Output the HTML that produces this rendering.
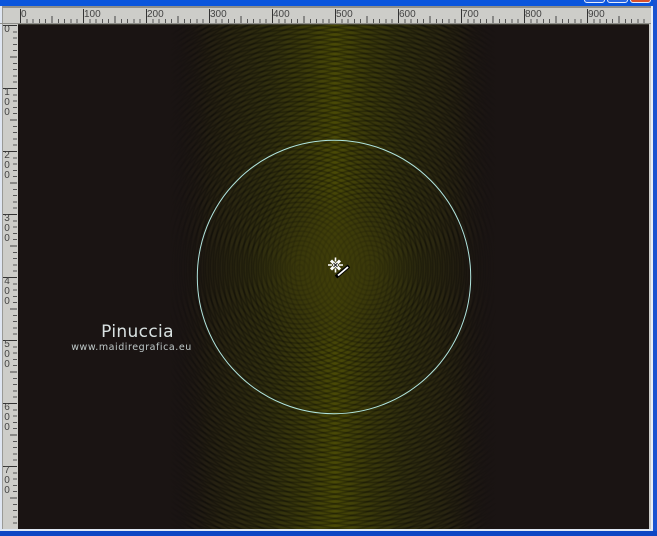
<!DOCTYPE html>
<html>
<head>
<meta charset="utf-8">
<style>
html,body{margin:0;padding:0;background:#0a3fc0;}
#w{position:relative;width:657px;height:536px;overflow:hidden;background:#cdcdc9;font-family:"Liberation Sans",sans-serif;}
.a{position:absolute;}
.hl{font-size:10px;line-height:10px;color:#444;top:10px;}
.vd{font-size:10px;line-height:10px;color:#444;left:3px;width:8px;text-align:center;}
</style>
</head>
<body>
<div id="w">
  <!-- window frame -->
  <div class="a" style="left:0;top:0;width:657px;height:6px;background:#0a55dc;"></div>
  <div class="a" style="left:0;top:6px;width:657px;height:2px;background:#8e8e8a;"></div>
  <div class="a" style="left:584px;top:-7px;width:19px;height:8px;border:1px solid #e8eefc;border-radius:3px;background:#2a66e0;"></div>
  <div class="a" style="left:607px;top:-7px;width:19px;height:8px;border:1px solid #e8eefc;border-radius:3px;background:#2a66e0;"></div>
  <div class="a" style="left:630px;top:-7px;width:19px;height:8px;border:1px solid #e8eefc;border-radius:3px;background:#d8502c;"></div>
  <div class="a" style="left:0;top:6px;width:2px;height:526px;background:#dfe6f2;"></div>
  <div class="a" style="left:2px;top:8px;width:1px;height:522px;background:#9a9a96;"></div>
  <div class="a" style="left:651px;top:6px;width:2px;height:526px;background:#e8eef6;"></div>
  <div class="a" style="left:653px;top:0;width:4px;height:536px;background:#1a52d0;"></div>
  <div class="a" style="left:0;top:529px;width:653px;height:2px;background:#dfe8f4;"></div>
  <div class="a" style="left:0;top:531px;width:657px;height:5px;background:#0e46c4;"></div>

  <!-- horizontal ruler -->
  <div class="a" style="left:20px;top:19px;width:630px;height:4px;background:repeating-linear-gradient(90deg,#555 0,#555 1px,transparent 1px,transparent 6.3px);"></div>
  <div class="a" style="left:20px;top:16px;width:630px;height:7px;background:repeating-linear-gradient(90deg,#444 0,#444 1px,transparent 1px,transparent 31.5px);"></div>
  <div class="a" style="left:20px;top:9px;width:630px;height:14px;background:repeating-linear-gradient(90deg,#333 0,#333 1px,transparent 1px,transparent 63px);"></div>
  <div class="a" style="left:0;top:23px;width:651px;height:1px;background:#8e8e8a;"></div>
  <span class="a hl" style="left:21px;">0</span>
  <span class="a hl" style="left:84px;">100</span>
  <span class="a hl" style="left:147px;">200</span>
  <span class="a hl" style="left:210px;">300</span>
  <span class="a hl" style="left:273px;">400</span>
  <span class="a hl" style="left:336px;">500</span>
  <span class="a hl" style="left:399px;">600</span>
  <span class="a hl" style="left:462px;">700</span>
  <span class="a hl" style="left:525px;">800</span>
  <span class="a hl" style="left:588px;">900</span>

  <!-- vertical ruler -->
  <div class="a" style="left:13px;top:25px;width:4px;height:504px;background:repeating-linear-gradient(180deg,#555 0,#555 1px,transparent 1px,transparent 6.3px);"></div>
  <div class="a" style="left:10px;top:25px;width:7px;height:504px;background:repeating-linear-gradient(180deg,#444 0,#444 1px,transparent 1px,transparent 31.5px);"></div>
  <div class="a" style="left:3px;top:25px;width:14px;height:504px;background:repeating-linear-gradient(180deg,#333 0,#333 1px,transparent 1px,transparent 63px);"></div>
  <span class="a vd" style="top:25px;">0</span>
  <span class="a vd" style="top:88px;">1</span><span class="a vd" style="top:98px;">0</span><span class="a vd" style="top:108px;">0</span>
  <span class="a vd" style="top:151px;">2</span><span class="a vd" style="top:161px;">0</span><span class="a vd" style="top:171px;">0</span>
  <span class="a vd" style="top:214px;">3</span><span class="a vd" style="top:224px;">0</span><span class="a vd" style="top:234px;">0</span>
  <span class="a vd" style="top:277px;">4</span><span class="a vd" style="top:287px;">0</span><span class="a vd" style="top:297px;">0</span>
  <span class="a vd" style="top:340px;">5</span><span class="a vd" style="top:350px;">0</span><span class="a vd" style="top:360px;">0</span>
  <span class="a vd" style="top:403px;">6</span><span class="a vd" style="top:413px;">0</span><span class="a vd" style="top:423px;">0</span>
  <span class="a vd" style="top:466px;">7</span><span class="a vd" style="top:476px;">0</span><span class="a vd" style="top:486px;">0</span>

  <!-- canvas -->
  <div class="a" style="left:18px;top:24px;width:631px;height:505px;overflow:hidden;background:#1a1413;">
    <div class="a" style="left:0;top:0;width:631px;height:505px;background:linear-gradient(90deg,#1a1413 0,#1a1413 155px,#211b12 180px,#2a2610 215px,#302e0e 250px,#3b3a0a 285px,#4a4a06 317px,#3b3a0a 350px,#302e0e 385px,#2a2610 420px,#211b12 452px,#1a1413 476px,#1a1413 631px);"></div>
    <div class="a" style="left:0;top:0;width:631px;height:505px;mix-blend-mode:multiply;background:repeating-radial-gradient(circle at 282px 244px,#fff 0,#fff 1.8px,#a8a8a8 3.2px,#fff 4.8px);"></div>
    <div class="a" style="left:0;top:0;width:631px;height:505px;mix-blend-mode:multiply;background:repeating-radial-gradient(circle at 352px 244px,#fff 0,#fff 1.8px,#a8a8a8 3.2px,#fff 4.8px);"></div>
    <div class="a" style="left:0;top:0;width:631px;height:505px;background:radial-gradient(circle at 317px 244px,rgba(60,58,10,.75) 0,rgba(58,56,10,.65) 35px,rgba(52,50,12,.35) 60px,rgba(50,48,12,0) 85px);"></div>
    <div class="a" style="left:0;top:0;width:631px;height:505px;background:linear-gradient(90deg,#1a1413 0,#1a1413 150px,rgba(26,20,19,0) 190px,rgba(26,20,19,0) 440px,#1a1413 480px,#1a1413 631px);"></div>
  </div>
  <div class="a" style="left:18px;top:24px;width:631px;height:1px;background:#55554a;opacity:.6;"></div>

  <!-- circle + cursor -->
  <svg class="a" style="left:0;top:0;" width="657" height="536" viewBox="0 0 657 536">
    <circle cx="334" cy="277" r="136.7" fill="none" stroke="#b0e4de" stroke-width="1"/>
    <g stroke="#fff" fill="none">
      <path d="M335.5 257.500v4M335.5 268.500v4M328 265h4M339 265h4" stroke-width="1.600"/>
      <path d="M331 260.500l9 9M340 260.500l-9 9" stroke-width="3"/>
    </g>
    <path d="M333.500 263l4 4M337.500 263l-4 4" stroke="#222" stroke-width="1" fill="none"/>
    <path d="M336 277l13-11" stroke="#000" stroke-width="3.800" fill="none"/>
    <path d="M338 275.500l10-8.500" stroke="#fff" stroke-width="1.800" fill="none"/>
  </svg>

  <!-- watermark -->
  <div class="a" style="left:60px;top:322px;width:155px;text-align:center;color:#d9e2e2;font-family:'DejaVu Sans',sans-serif;font-size:17px;line-height:20px;letter-spacing:.35px;">Pinuccia</div>
  <div class="a" style="left:50px;top:342px;width:163px;text-align:center;color:#bfc9c9;font-family:'DejaVu Sans',sans-serif;font-size:9.500px;line-height:12px;letter-spacing:.55px;white-space:nowrap;">www.maidiregrafica.eu</div>
</div>
</body>
</html>
